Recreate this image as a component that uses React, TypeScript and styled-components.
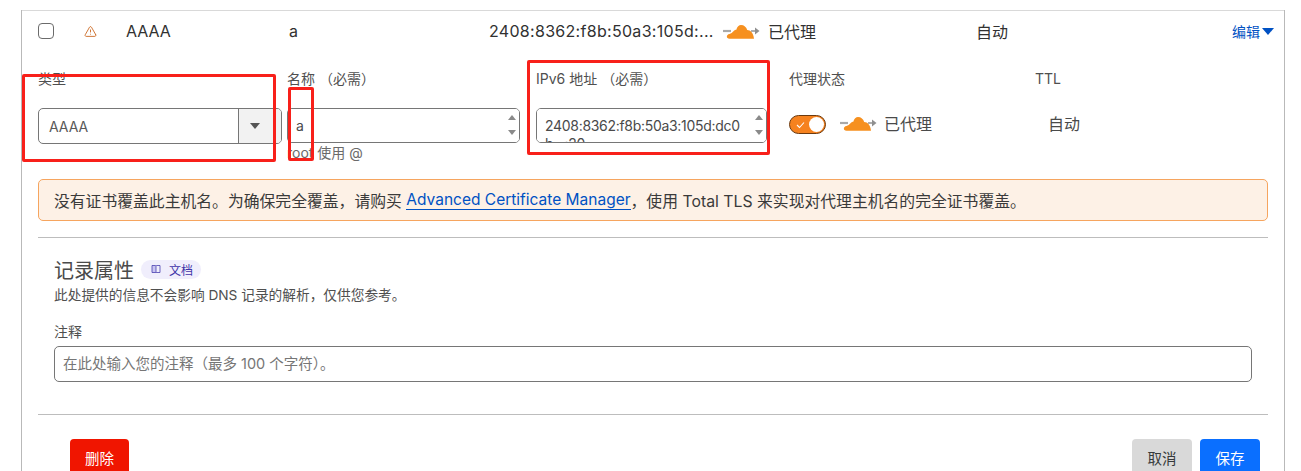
import React from 'react';
import styled, { createGlobalStyle } from 'styled-components';
import { TriangleAlert } from 'lucide-react';

const GlobalStyle = createGlobalStyle`
  html, body {
    margin: 0;
    height: 471px;
    overflow: hidden;
    background: #fff;
    font-family: Inter, "Noto Sans CJK SC", sans-serif;
    color: #36393a;
  }
`;

const CloudIcon = () => (
  <svg width="37" height="16" viewBox="0 0 37 16">
    <path d="M0 8h8" stroke="#a9a9a9" strokeWidth="2.200" fill="none" />
    <path d="M28 8h5" stroke="#9a9a9a" strokeWidth="1.600" fill="none" />
    <path d="M32 4.500l4.500 3.500L32 11.500z" fill="#8f8f8f" />
    <path
      d="M6.500 15.800C3 15.800 3 11.500 6.500 11 8 10.600 9.500 9.500 10.500 8.300 11.300 7.300 12.300 6.800 13.300 6.800 14 3.500 16 2 18 2 21 2 23.500 4 24.200 7 27.500 7 30.500 10 31 15.800z"
      fill="#f6901f"
    />
  </svg>
);

const BookIcon = () => (
  <svg width="10" height="10" viewBox="0 0 10 10">
    <path d="M1 1.500h3.500l.5.500v7l-.5-.5H1z" fill="#c9c4f2" stroke="#4a40b0" strokeWidth="0.800" />
    <path d="M5 2l.5-.5H9v7H5.500L5 9" fill="none" stroke="#4a40b0" strokeWidth="0.800" />
  </svg>
);

const Card = styled.main`
  position: relative;
  box-sizing: border-box;
  width: 1264px;
  height: 481px;
  margin: 10px 0 0 21px;
  border: 1px solid #b9b9b9;
  border-top: 0;
  box-shadow: inset 0 1px 0 #d9d9d9;
  padding: 1px 16px 0;
`;

const RecordRow = styled.div`
  display: grid;
  grid-template-columns: 43px 45px 163px 200px 234px 253px 1fr auto;
  align-items: center;
  height: 40px;
  font-size: 16px;
  color: #313131;
`;

const Checkbox = styled.span`
  box-sizing: border-box;
  display: block;
  width: 16px;
  height: 16px;
  border: 1px solid #6b6b6b;
  border-radius: 4px;
`;

const WarnIcon = styled(TriangleAlert)`
  color: #c8621a;
  display: block;
  margin-left: 3px;
`;

const ContentCell = styled.span`
  letter-spacing: 0.3px;
  white-space: nowrap;
`;

const ProxyCell = styled.span`
  display: flex;
  align-items: center;
  gap: 8px;
`;

const EditLink = styled.span`
  display: flex;
  align-items: center;
  gap: 2px;
  font-size: 14px;
  color: #0051c3;
  margin-right: -6px;
`;

const Caret = styled.span`
  width: 0;
  height: 0;
  border-left: 6.500px solid transparent;
  border-right: 6.500px solid transparent;
  border-top: 7px solid #0051c3;
`;

const FormGrid = styled.div`
  display: grid;
  grid-template-columns: 249px 249px 253px 246px 1fr;
  margin-top: 18px;
`;

const Field = styled.div`
  display: flex;
  flex-direction: column;
`;

const FieldLabel = styled.label`
  height: 20px;
  line-height: 20px;
  font-size: 14px;
  color: #4f4f4f;
  margin-bottom: 19px;
`;

const SelectBox = styled.div`
  box-sizing: border-box;
  display: flex;
  width: 244px;
  height: 36px;
  border: 1px solid #767676;
  border-radius: 5px;
  overflow: hidden;
`;

const SelectValue = styled.span`
  flex: 1;
  padding-left: 10px;
  line-height: 35px;
  font-size: 14px;
  color: #595959;
`;

const SelectButton = styled.span`
  box-sizing: border-box;
  width: 43px;
  padding-right: 10px;
  border-left: 1px solid #767676;
  background: #f2f2f2;
  display: flex;
  align-items: center;
  justify-content: center;
`;

const SelectCaret = styled.span`
  width: 0;
  height: 0;
  border-left: 5px solid transparent;
  border-right: 5px solid transparent;
  border-top: 6px solid #555;
`;

const InputShell = styled.div<{ $width: number }>`
  position: relative;
  box-sizing: border-box;
  width: ${(p) => p.$width}px;
  height: 35px;
  border: 1px solid #767676;
  border-radius: 5px;
  overflow: hidden;
`;

const TextArea = styled.textarea`
  display: block;
  box-sizing: border-box;
  width: 100%;
  height: 100%;
  border: 0;
  outline: 0;
  resize: none;
  overflow: hidden;
  padding: 8px 12px 0 8px;
  font: 14px/18px Inter, "Noto Sans CJK SC", sans-serif;
  letter-spacing: -0.3px;
  color: #4a4a4a;
`;

const Spinner = styled.span`
  position: absolute;
  right: 3px;
  top: 6px;
  display: flex;
  flex-direction: column;
  gap: 10px;
`;

const SpinUp = styled.span`
  width: 0;
  height: 0;
  border-left: 4px solid transparent;
  border-right: 4px solid transparent;
  border-bottom: 5px solid #8a8a8a;
`;

const SpinDown = styled(SpinUp)`
  border-bottom: 0;
  border-top: 5px solid #8a8a8a;
`;

const Hint = styled.small`
  font-size: 14px;
  line-height: 18px;
  margin-top: 1px;
  color: #6a6a6a;
`;

const ProxyControl = styled.div`
  display: flex;
  align-items: center;
  gap: 14px;
  height: 33px;
  font-size: 16px;
  color: #4a4a4a;
`;

const ProxyGroup = styled.span`
  display: flex;
  align-items: center;
  gap: 7px;
  margin-bottom: 4px;
`;

const Toggle = styled.span`
  box-sizing: border-box;
  display: flex;
  align-items: center;
  justify-content: space-between;
  width: 37px;
  height: 19px;
  padding: 0 1px 0 6px;
  border: 1px solid #6b3a10;
  border-radius: 10px;
  background: #f6821f;
`;

const ToggleKnob = styled.span`
  width: 15px;
  height: 15px;
  border-radius: 50%;
  background: #fff;
`;

const TtlValue = styled.div`
  height: 33px;
  line-height: 33px;
  padding-left: 13px;
  font-size: 16px;
  color: #4a4a4a;
`;

const Alert = styled.div`
  box-sizing: border-box;
  height: 42px;
  margin-top: 17px;
  padding: 0 15px;
  display: flex;
  align-items: center;
  border: 1px solid #f6a55f;
  border-radius: 5px;
  background: #fdf1e6;
  font-size: 15.820px;
  color: #3a3a3a;
  white-space: pre;
`;

const AlertLink = styled.a`
  color: #0051c3;
  border-bottom: 1px solid #0051c3;
  line-height: 18px;
  font-size: 15.500px;
`;

const Divider = styled.hr`
  height: 1px;
  border: 0;
  margin: 0;
  background: #bdbdbd;
`;

const TopDivider = styled(Divider)`
  margin-top: 16px;
`;

const AttributesSection = styled.section`
  padding: 19px 16px 32px;
`;

const TitleRow = styled.div`
  display: flex;
  align-items: center;
  gap: 7px;
  height: 24px;
`;

const SectionTitle = styled.h2`
  margin: 0;
  font-size: 20px;
  font-weight: 400;
  color: #4a4a4a;
`;

const DocBadge = styled.span`
  display: flex;
  align-items: center;
  gap: 8px;
  height: 19px;
  padding: 0 8px 0 10px;
  border-radius: 10px;
  background: #f0eefc;
  font-size: 12px;
  color: #3f34a8;
`;

const Description = styled.p`
  margin: 5px 0 0;
  font-size: 13.700px;
  line-height: 18px;
  color: #4f4f4f;
`;

const NoteLabel = styled.label`
  display: block;
  margin-top: 18px;
  font-size: 14px;
  line-height: 20px;
  color: #4f4f4f;
`;

const NoteInput = styled.div`
  box-sizing: border-box;
  height: 36px;
  margin-top: 4px;
  padding-left: 8px;
  border: 1px solid #767676;
  border-radius: 5px;
  font-size: 14.500px;
  line-height: 34px;
  color: #767676;
`;

const Actions = styled.div`
  display: flex;
  justify-content: space-between;
  padding: 24px 8px 0 32px;
`;

const ActionGroup = styled.div`
  display: flex;
  gap: 8px;
`;

const Button = styled.button<{ $bg: string; $fg: string; $width: number }>`
  width: ${(p) => p.$width}px;
  height: 36px;
  border: 0;
  border-radius: 4px;
  font: 14.500px Inter, "Noto Sans CJK SC", sans-serif;
  background: ${(p) => p.$bg};
  color: ${(p) => p.$fg};
`;

const Annotation = styled.span<{ $x: number; $y: number; $w: number; $h: number }>`
  position: absolute;
  box-sizing: border-box;
  left: ${(p) => p.$x}px;
  top: ${(p) => p.$y}px;
  width: ${(p) => p.$w}px;
  height: ${(p) => p.$h}px;
  border: 3px solid #f8201a;
  border-radius: 2px;
  pointer-events: none;
`;

const ipv6 = '2408:8362:f8b:50a3:105d:dc0\nb...:20';

export default function App() {
  return (
    <>
      <GlobalStyle />
      <Card>
        <RecordRow>
          <Checkbox />
          <WarnIcon size={13} strokeWidth={1.600} />
          <span>AAAA</span>
          <span>a</span>
          <ContentCell>2408:8362:f8b:50a3:105d:...</ContentCell>
          <ProxyCell>
            <CloudIcon />
            已代理
          </ProxyCell>
          <span>自动</span>
          <EditLink>
            编辑
            <Caret />
          </EditLink>
        </RecordRow>

        <FormGrid>
          <Field>
            <FieldLabel>类型</FieldLabel>
            <SelectBox>
              <SelectValue>AAAA</SelectValue>
              <SelectButton>
                <SelectCaret />
              </SelectButton>
            </SelectBox>
          </Field>
          <Field>
            <FieldLabel>名称 （必需）</FieldLabel>
            <InputShell $width={233}>
              <TextArea readOnly value="a" />
              <Spinner>
                <SpinUp />
                <SpinDown />
              </Spinner>
            </InputShell>
            <Hint>root 使用 @</Hint>
          </Field>
          <Field>
            <FieldLabel>IPv6 地址 （必需）</FieldLabel>
            <InputShell $width={231}>
              <TextArea readOnly value={ipv6} />
              <Spinner>
                <SpinUp />
                <SpinDown />
              </Spinner>
            </InputShell>
          </Field>
          <Field>
            <FieldLabel>代理状态</FieldLabel>
            <ProxyControl>
              <Toggle>
                <svg width="9" height="8" viewBox="0 0 9 8">
                  <path d="M1 4l2.500 2.500L8 1.500" stroke="#fff" strokeWidth="1.100" fill="none" />
                </svg>
                <ToggleKnob />
              </Toggle>
              <ProxyGroup>
                <CloudIcon />
                已代理
              </ProxyGroup>
            </ProxyControl>
          </Field>
          <Field>
            <FieldLabel>TTL</FieldLabel>
            <TtlValue>自动</TtlValue>
          </Field>
        </FormGrid>

        <Alert>
          没有证书覆盖此主机名。为确保完全覆盖，请购买 <AlertLink>Advanced Certificate Manager</AlertLink>，使用 Total TLS 来实现对代理主机名的完全证书覆盖。
        </Alert>
        <TopDivider />

        <AttributesSection>
          <TitleRow>
            <SectionTitle>记录属性</SectionTitle>
            <DocBadge>
              <BookIcon />
              文档
            </DocBadge>
          </TitleRow>
          <Description>此处提供的信息不会影响 DNS 记录的解析，仅供您参考。</Description>
          <NoteLabel>注释</NoteLabel>
          <NoteInput>在此处输入您的注释（最多 100 个字符）。</NoteInput>
        </AttributesSection>
        <Divider />

        <Actions>
          <Button $bg="#f01500" $fg="#fff" $width={59}>删除</Button>
          <ActionGroup>
            <Button $bg="#d9d9d9" $fg="#36393a" $width={60}>取消</Button>
            <Button $bg="#0a6fff" $fg="#fff" $width={60}>保存</Button>
          </ActionGroup>
        </Actions>

        <Annotation $x={0} $y={64} $w={254} $h={88} />
        <Annotation $x={266} $y={77} $w={26} $h={74} />
        <Annotation $x={505} $y={50} $w={243} $h={95} />
      </Card>
    </>
  );
}
